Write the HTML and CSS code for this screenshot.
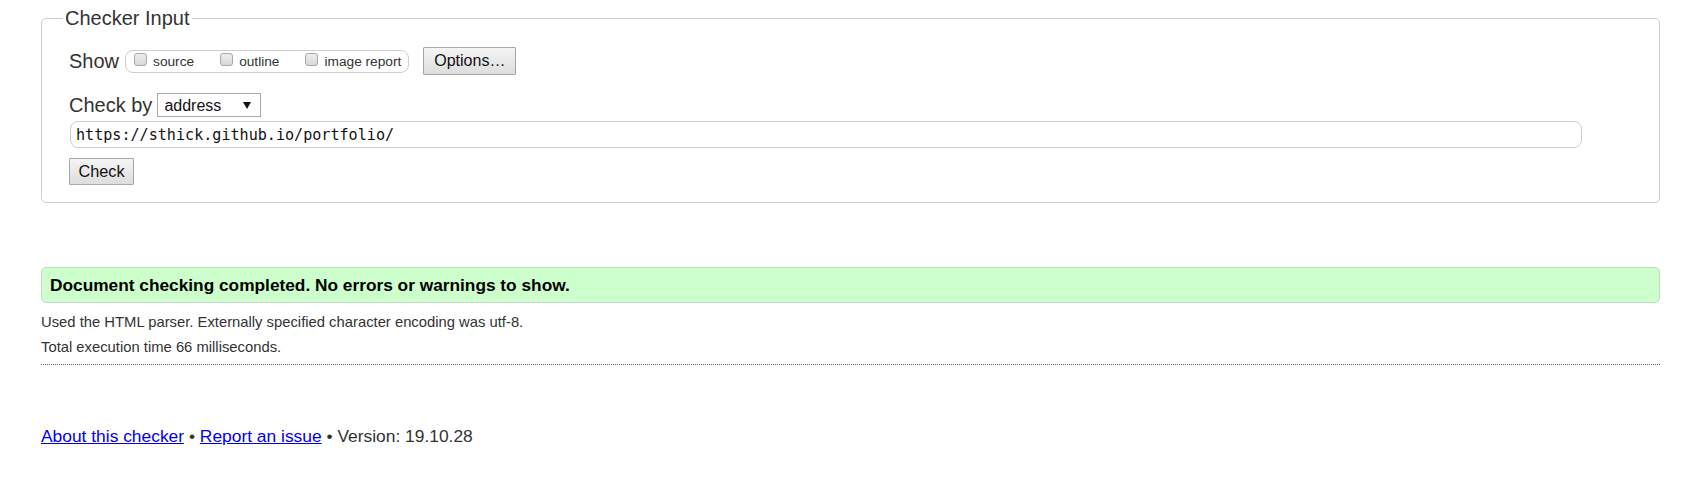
FILE: index.html
```html
<!DOCTYPE html>
<html lang="en">
<head>
<meta charset="utf-8">
<title>Nu Html Checker</title>
<link rel="stylesheet" href="styles.css">
</head>
<body>
<div class="page">
  <form class="checker">
    <fieldset class="input-box">
      <legend class="input-legend">Checker Input</legend>
      <div class="input-content">
        <div class="row row-show">
          <span class="row-label">Show</span>
          <span class="show-group">
            <label class="opt"><input type="checkbox" class="cb"><span class="opt-text">source</span></label>
            <label class="opt"><input type="checkbox" class="cb"><span class="opt-text">outline</span></label>
            <label class="opt"><input type="checkbox" class="cb"><span class="opt-text">image report</span></label>
          </span>
          <button type="button" class="btn btn-options">Options…</button>
        </div>
        <div class="row row-checkby">
          <span class="row-label">Check by</span>
          <span class="select-wrap">
            <select class="select"><option>address</option></select>
          </span>
        </div>
        <div class="row row-url">
          <input type="text" class="url" value="https://sthick.github.io/portfolio/">
        </div>
        <div class="row row-submit">
          <button type="button" class="btn btn-check">Check</button>
        </div>
      </div>
    </fieldset>
  </form>

  <div class="success">Document checking completed. No errors or warnings to show.</div>

  <div class="details">
    <p class="detail">Used the HTML parser. Externally specified character encoding was utf-8.</p>
    <p class="detail">Total execution time 66 milliseconds.</p>
  </div>

  <p class="footer"><a href="#" class="link">About this checker</a> • <a href="#" class="link">Report an issue</a> • Version: 19.10.28</p>
</div>
</body>
</html>
```
FILE: styles.css
```css
html, body {
  margin: 0;
  padding: 0;
  background: #fff;
}
body {
  font-family: "Liberation Sans", Arial, sans-serif;
  color: #333;
}
.page {
  padding: 0 41px 0 41px;
}
.checker {
  margin: 0;
}
.input-box {
  margin: 7px 0 0 0;
  border: 1px solid #cccccc;
  border-radius: 5px;
  padding: 0 20px 17px 21px;
  min-width: 0;
}
.input-legend {
  font-size: 20px;
  line-height: 23px;
  padding: 0 2px;
  color: #333;
}
.input-content {
  padding-left: 6px;
}
.row {
  display: flex;
  align-items: center;
}
.row-label {
  font-size: 20px;
  line-height: 23px;
  color: #333;
}
.row-show {
  margin-top: 17px;
  height: 28px;
}
.show-group {
  display: inline-flex;
  align-items: center;
  height: 21px;
  border: 1px solid #cfcfcf;
  border-radius: 8px;
  padding: 0 7px 0 8px;
  margin-left: 6px;
}
.opt {
  display: inline-flex;
  align-items: center;
  margin-right: 26px;
}
.opt:last-child {
  margin-right: 0;
}
.cb {
  appearance: none;
  -webkit-appearance: none;
  width: 13px;
  height: 13px;
  margin: 0 6px 4px 0;
  border: 1px solid #a8a8a8;
  border-radius: 3px;
  background: linear-gradient(#ededed, #d8d8d8);
  box-sizing: border-box;
}
.opt-text {
  font-size: 13.7px;
  line-height: 16px;
  color: #333;
  margin-top: 2px;
}
.btn {
  font-family: "Liberation Sans", Arial, sans-serif;
  font-size: 16px;
  color: #111;
  background: linear-gradient(#f5f5f5, #dddddd);
  border: 1px solid #a6a6a6;
  border-radius: 1px;
  box-sizing: border-box;
  margin: 0;
}
.btn-options {
  height: 28px;
  width: 93px;
  padding: 0;
  margin-left: 14px;
}
.row-checkby {
  margin-top: 18px;
}
.select-wrap {
  position: relative;
  display: inline-block;
  margin-left: 5px;
}
.select {
  appearance: none;
  -webkit-appearance: none;
  width: 104px;
  height: 24px;
  border: 1px solid #a9a9a9;
  border-radius: 0;
  background: #fff;
  font-family: "Liberation Sans", Arial, sans-serif;
  font-size: 16px;
  color: #111;
  padding: 0 0 0 6px;
  margin: 0;
  display: block;
}
.select-wrap::after {
  content: "";
  position: absolute;
  right: 10px;
  top: 9px;
  border-left: 4px solid transparent;
  border-right: 4px solid transparent;
  border-top: 7px solid #111;
}
.row-url {
  margin-top: 4px;
}
.url {
  width: 1512px;
  height: 27px;
  box-sizing: border-box;
  margin: 0 0 0 1px;
  border: 1px solid #cccccc;
  border-radius: 8px;
  padding: 0 5px;
  font-family: "DejaVu Sans Mono", "Liberation Mono", monospace;
  font-size: 15.1px;
  color: #111;
  background: #fff;
}
.row-submit {
  margin-top: 10px;
}
.btn-check {
  height: 27px;
  width: 65px;
  padding: 0;
  font-size: 16.3px;
}
.success {
  margin-top: 64px;
  height: 34px;
  line-height: 34px;
  border: 1px solid #c5d8c5;
  border-radius: 5px;
  background: #ccffcc;
  padding: 0 8px;
  font-size: 17.3px;
  font-weight: bold;
  color: #000;
}
.details {
  margin-top: 7px;
  padding-bottom: 4px;
  border-bottom: 1px dotted #666;
}
.detail {
  margin: 0;
  font-size: 14.8px;
  line-height: 25px;
  color: #333;
}
.footer {
  margin: 61px 0 0 0;
  font-size: 17.4px;
  line-height: 20px;
  color: #333;
}
.link {
  color: #0000ee;
  text-decoration: underline;
}
```
